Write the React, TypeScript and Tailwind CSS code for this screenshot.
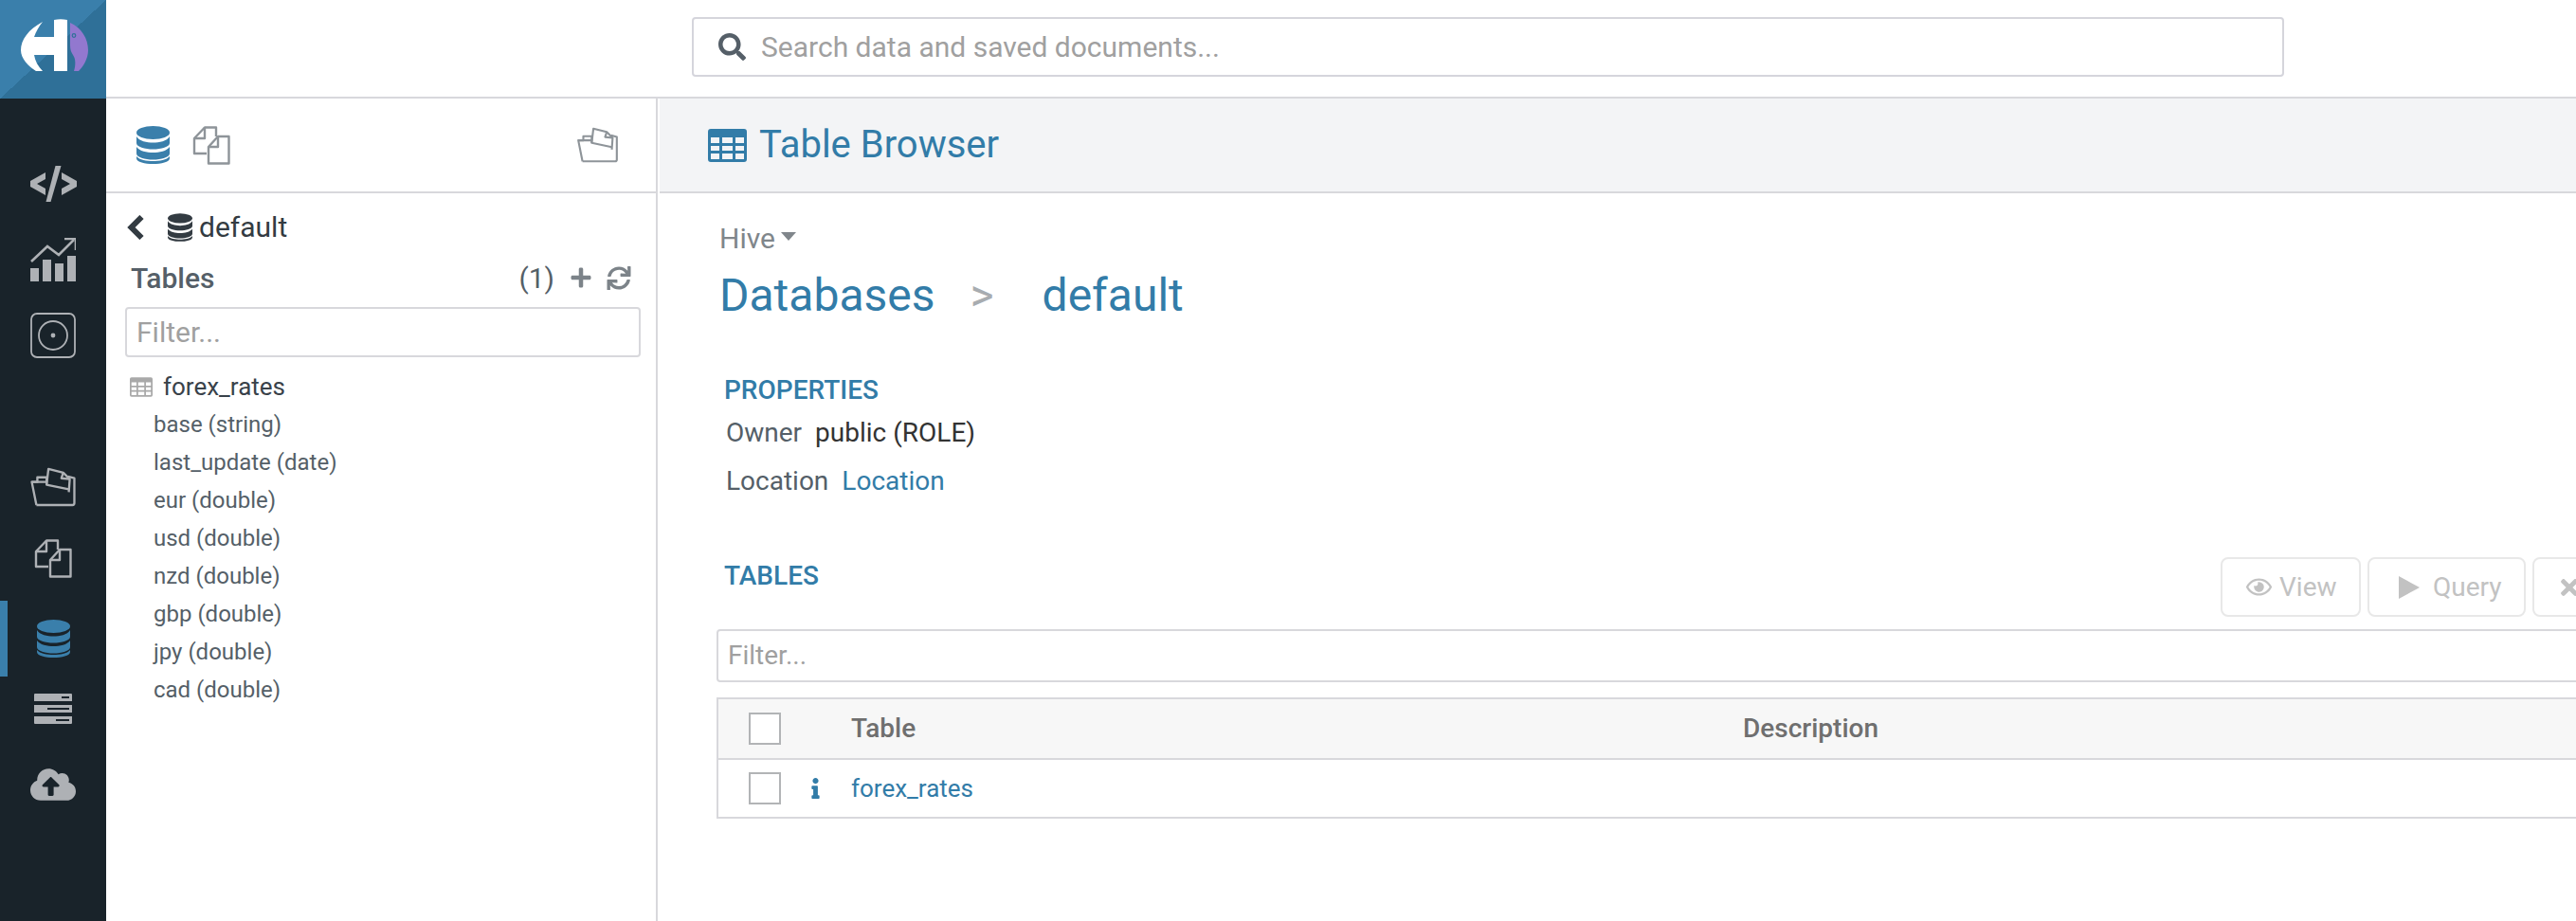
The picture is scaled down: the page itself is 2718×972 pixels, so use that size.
import { FaCloudUploadAlt, FaInfo, FaPlus, FaRegEye, FaSearch, FaSync, FaTimes } from "react-icons/fa"

const columns = [
  "base (string)",
  "last_update (date)",
  "eur (double)",
  "usd (double)",
  "nzd (double)",
  "gbp (double)",
  "jpy (double)",
  "cad (double)",
]

function HueLogo() {
  return (
    <svg viewBox="0 0 112 104" className="h-[104px] w-[112px]">
      <path d="M45 23 C30 31 22 42 22 53 C22 62 30 70 38 75 L45 75 C40 70 37 64 36 58 L57 58 L57 75 L71 75 L71 21 C66 20 62 20 57 21 L57 39 L36 39 C38 33 41 28 45 23 Z" fill="#ffffff" />
      <path d="M74 24 C86 29 93 41 93 53 C93 62 88 70 83 75 L78 75 C80 69 80 62 77 58 C75 55 74 52 74 48 Z" fill="#9278cf" />
      <circle cx="78" cy="37.5" r="1.8" fill="none" stroke="#2f7098" strokeWidth="1.2" />
    </svg>
  )
}

function DbIcon({ className }: { className: string }) {
  return (
    <svg viewBox="0 0 35 40" className={className} fill="currentColor">
      <ellipse cx="17.5" cy="7" rx="17.5" ry="7" />
      <path d="M0 11 C3 16 11 17.5 17.5 17.5 C24 17.5 32 16 35 11 L35 18 C35 22 26 24.5 17.5 24.5 C9 24.5 0 22 0 18 Z" />
      <path d="M0 22 C3 26.5 11 28 17.5 28 C24 28 32 26.5 35 22 L35 29 C35 33 26 35.5 17.5 35.5 C9 35.5 0 33 0 29 Z" />
      <path d="M0 32 C3 36 11 37 17.5 37 C24 37 32 36 35 32 L35 34 C35 38 26 40 17.5 40 C9 40 0 38 0 34 Z" />
    </svg>
  )
}

function DocsIcon({ className }: { className: string }) {
  return (
    <svg viewBox="0 0 40 41" className={className} fill="none" stroke="currentColor" strokeWidth="2.4" strokeLinejoin="round">
      <path d="M15 29 L2 29 L2 13 L13 1.5 L25 1.5 L25 11" />
      <path d="M13 1.5 L13 13 L2 13" />
      <path d="M17 39.5 L17 22 L27 11 L38.5 11 L38.5 39.5 Z" />
      <path d="M27 11 L27 22 L17 22" />
    </svg>
  )
}

function FolderIcon({ className }: { className: string }) {
  return (
    <svg viewBox="0 0 48 43" className={className} fill="none" stroke="currentColor" strokeWidth="2.4" strokeLinejoin="round">
      <path d="M6 41 L1 16 L7 16 L7 11 L17 11 L17 16" />
      <path d="M6 41 L45 41 C46.5 41 47 40 47 39 L47 12 L40 10" />
      <path d="M17 19 L19 2 L35 6 L42 13 L41 27" />
      <path d="M35 6 L33 12 L42 13" />
      <path d="M1 16 L17 16 L17 19 L41 24" />
    </svg>
  )
}

function TableIcon({ className }: { className: string }) {
  return (
    <svg viewBox="0 0 41 35" className={className} fill="currentColor">
      <path fillRule="evenodd" d="M3 0 H38 A3 3 0 0 1 41 3 V32 A3 3 0 0 1 38 35 H3 A3 3 0 0 1 0 32 V3 A3 3 0 0 1 3 0 Z M3 9 V15 H12 V9 Z M15 9 V15 H26 V9 Z M29 9 V15 H38 V9 Z M3 18 V23 H12 V18 Z M15 18 V23 H26 V18 Z M29 18 V23 H38 V18 Z M3 26 V32 H12 V26 Z M15 26 V32 H26 V26 Z M29 26 V32 H38 V26 Z" />
    </svg>
  )
}

function NavIcons() {
  return (
    <div className="flex flex-1 flex-col items-center text-[#aeb1b5]">
      {/* editor */}
      <svg viewBox="0 0 49 38" className="mt-[71px] h-[38px] w-[49px]" fill="currentColor">
        <path d="M16 7 L16 14 L7 19 L16 24 L16 31 L0 22 L0 16 Z" />
        <path d="M33 7 L49 16 L49 22 L33 31 L33 24 L42 19 L33 14 Z" />
        <path d="M26.5 0 L32.5 0 L21.5 38 L16.5 38 Z" />
      </svg>
      {/* dashboard */}
      <svg viewBox="0 0 48 46" className="mt-[38px] h-[46px] w-[48px]" fill="currentColor">
        <rect x="0" y="32" width="9" height="14" />
        <rect x="13" y="23" width="9" height="23" />
        <rect x="26" y="27" width="9" height="19" />
        <rect x="39" y="19" width="9" height="27" />
        <path d="M1 25 L18 9 L30 18 L46 2" fill="none" stroke="currentColor" strokeWidth="2.6" />
        <path d="M36 1 L48 1 L48 13" fill="none" stroke="currentColor" strokeWidth="2.6" />
      </svg>
      {/* scheduler */}
      <svg viewBox="0 0 48 48" className="mt-[33px] h-[48px] w-[48px]" fill="none" stroke="currentColor" strokeWidth="1.8">
        <rect x="1" y="1" width="46" height="46" rx="6" />
        <circle cx="24" cy="24" r="15" />
        <circle cx="24" cy="24" r="2.4" fill="currentColor" stroke="none" />
      </svg>
      <FolderIcon className="mt-[115px] h-[42px] w-[48px]" />
      <DocsIcon className="mt-[34px] h-[41px] w-[40px]" />
      <div className="relative mt-[24px] flex h-[80px] w-full items-center justify-center">
        <div className="absolute top-0 left-0 h-[80px] w-[8px] bg-[#3a7fab]" />
        <DbIcon className="h-[40px] w-[35px] text-[#3a7fab]" />
      </div>
      {/* servers */}
      <svg viewBox="0 0 40 32" className="mt-[18px] h-[32px] w-[40px]" fill="currentColor">
        <path fillRule="evenodd" d="M1 0 H39 A1 1 0 0 1 40 1 V8 H0 V1 A1 1 0 0 1 1 0 Z M29 3 V5 H37 V3 Z" />
        <path fillRule="evenodd" d="M0 12 H40 V20 H0 Z M14 15 V17 H37 V15 Z" />
        <path fillRule="evenodd" d="M0 24 H40 V31 A1 1 0 0 1 39 32 H1 A1 1 0 0 1 0 31 Z M23 27 V29 H37 V27 Z" />
      </svg>
      <FaCloudUploadAlt className="mt-[42px] h-[44px] w-[48px]" />
    </div>
  )
}

function LeftAssist() {
  return (
    <div className="flex h-full w-[582px] flex-none flex-col border-r-2 border-[#d8d8dc] text-[#555f68]">
      <div className="flex h-[100px] flex-none items-center border-b-2 border-[#d8d8dc] pr-[40px] pl-[32px]">
        <DbIcon className="h-[40px] w-[35px] text-[#3a7fab]" />
        <DocsIcon className="ml-[24px] h-[41px] w-[40px] text-[#8e9499]" />
        <FolderIcon className="ml-auto h-[38px] w-[43px] text-[#8e9499]" />
      </div>
      <div className="flex h-[50px] flex-none items-center pt-[22px] pl-[22px] text-[30px] text-[#333b42]">
        <svg viewBox="0 0 18 26" className="h-[26px] w-[18px]" fill="none" stroke="currentColor" strokeWidth="6">
          <path d="M15.5 2 L4.5 13 L15.5 24" />
        </svg>
        <DbIcon className="ml-[25px] h-[30px] w-[26px]" />
        <span className="ml-[7px] leading-none">default</span>
      </div>
      <div className="mt-[19px] flex h-[40px] flex-none items-center pr-[26px] pl-[26px] text-[30px]">
        <span className="font-medium">Tables</span>
        <span className="ml-auto">(1)</span>
        <FaPlus className="ml-[16px] h-[24px] w-[24px] text-[#7c8389]" />
        <FaSync className="ml-[15px] h-[25px] w-[26px] text-[#7c8389]" />
      </div>
      <div className="mt-[11px] mr-[16px] ml-[20px] flex h-[53px] flex-none items-center rounded border-2 border-[#d8d8dc] pl-[10px] text-[30px] text-[#a0a0a0]">
        Filter...
      </div>
      <div className="mt-[13px] flex h-[36px] flex-none items-center pl-[25px] text-[26px] text-[#39424a]">
        <TableIcon className="h-[21px] w-[24px] text-[#a9a9a9]" />
        <span className="ml-[11px]">forex_rates</span>
      </div>
      <ul className="mt-[2px] pl-[50px] text-[24px]">
        {columns.map((c) => (
          <li key={c} className="flex h-[40px] items-center">
            {c}
          </li>
        ))}
      </ul>
    </div>
  )
}

function DisabledButton({ children, className }: { children: React.ReactNode; className: string }) {
  return (
    <div className={`flex h-[63px] flex-none items-center rounded-lg border-2 border-[#e8e8e8] text-[28px] text-[#c2c2c2] ${className}`}>
      {children}
    </div>
  )
}

function TableDetail() {
  return (
    <div className="w-[2116px] pt-[32px] pl-[60px]">
      <div className="flex h-[30px] items-center pl-[3px] text-[30px] text-[#80868b]">
        Hive
        <span className="mt-[-4px] ml-[6px] h-0 w-0 border-x-[8px] border-t-[9px] border-x-transparent border-t-[#80868b]" />
      </div>
      <div className="mt-[16px] flex h-[60px] items-center pl-[3px] text-[48px] text-[#327ca8]">
        <span>Databases</span>
        <span className="ml-[37px] text-[#a8acb0]">&gt;</span>
        <span className="ml-[51px]">default</span>
      </div>
      <div className="mt-[50px] flex h-[40px] items-center pl-[8px] text-[28px] font-medium text-[#327ca8]">PROPERTIES</div>
      <div className="mt-[5px] flex h-[40px] items-center pl-[10px] text-[28px] text-[#555f68]">
        Owner <span className="ml-[14px] text-[#333333]">public (ROLE)</span>
      </div>
      <div className="mt-[11px] flex h-[40px] items-center pl-[10px] text-[28px] text-[#555f68]">
        Location <span className="ml-[14px] text-[#327ca8]">Location</span>
      </div>
      <div className="mt-[60px] flex h-[63px] items-start pl-[8px]">
        <span className="mt-[2px] text-[28px] font-medium leading-[36px] text-[#327ca8]">TABLES</span>
        <div className="ml-auto flex gap-[7px]">
          <DisabledButton className="w-[148px] pl-[25px]">
            <FaRegEye className="mr-[8px] h-[27px] w-[27px]" />
            <span>View</span>
          </DisabledButton>
          <DisabledButton className="w-[167px] pl-[31px]">
            <svg viewBox="0 0 22 24" className="mr-[14px] h-[24px] w-[22px]" fill="currentColor">
              <path d="M0 0 L22 12 L0 24 Z" />
            </svg>
            <span>Query</span>
          </DisabledButton>
          <DisabledButton className="w-[140px] pl-[26px]">
            <FaTimes className="h-[26px] w-[22px]" />
          </DisabledButton>
        </div>
      </div>
      <div className="mt-[13px] flex h-[56px] items-center rounded border-2 border-[#d8d8dc] pl-[10px] text-[28px] text-[#a0a0a0]">
        Filter...
      </div>
      <div className="mt-[16px] border-2 border-[#d8d8dc] text-[28px]">
        <div className="flex h-[64px] items-center border-b-2 border-[#d8d8dc] bg-[#f7f7f7] font-medium text-[#6f6f6f]">
          <span className="ml-[32px] h-[34px] w-[34px] border-2 border-[#b2b4b6] bg-white" />
          <span className="ml-[74px] w-[941px]">Table</span>
          <span>Description</span>
        </div>
        <div className="flex h-[60px] items-center text-[26px] text-[#327ca8]">
          <span className="ml-[32px] h-[34px] w-[34px] border-2 border-[#b2b4b6] bg-white" />
          <FaInfo className="ml-[31px] h-[22px] w-[11px]" />
          <span className="ml-[32px]">forex_rates</span>
        </div>
      </div>
    </div>
  )
}

export default function App() {
  return (
    <div className="flex h-[972px] w-[2718px] overflow-hidden bg-white font-['Roboto',sans-serif]">
      <aside className="flex h-full w-[112px] flex-none flex-col bg-[#19232a]">
        <div className="h-[104px] flex-none bg-[linear-gradient(137deg,#3a7fab_50%,#2f7098_50%)]">
          <HueLogo />
        </div>
        <NavIcons />
      </aside>
      <div className="flex min-w-0 flex-1 flex-col">
        <header className="flex h-[104px] flex-none items-start border-b-2 border-[#d8d8dc] pt-[18px] pl-[618px]">
          <div className="flex h-[63px] w-[1680px] items-center rounded border-2 border-[#d5d5dc] pl-[26px] text-[30px] text-[#a0a0a0]">
            <FaSearch className="h-[29px] w-[29px] text-[#555f68]" />
            <span className="ml-[16px]">Search data and saved documents...</span>
          </div>
        </header>
        <div className="flex min-h-0 flex-1">
          <LeftAssist />
          <main className="min-w-0 flex-1 overflow-hidden pl-[2px]">
            <div className="flex h-[100px] items-center border-b-2 border-[#d8d8dc] bg-[#f3f4f6] pl-[51px] text-[40px] text-[#327ca8]">
              <TableIcon className="h-[35px] w-[41px]" />
              <span className="ml-[13px]">Table Browser</span>
            </div>
            <TableDetail />
          </main>
        </div>
      </div>
    </div>
  )
}
